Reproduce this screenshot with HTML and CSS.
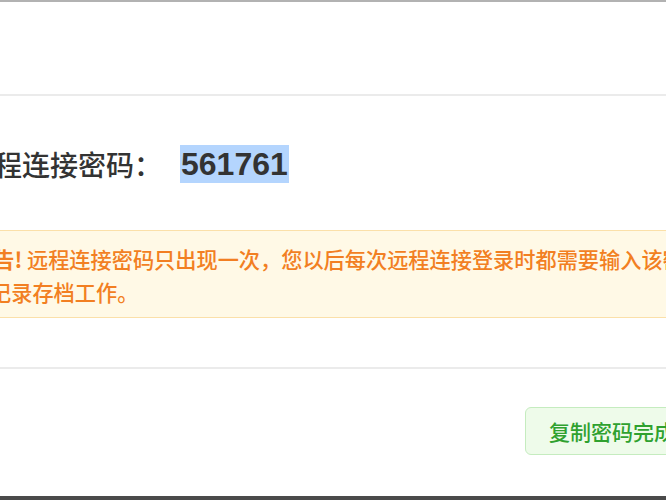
FILE: index.html
```html
<!DOCTYPE html>
<html lang="zh-CN">
<head>
<meta charset="utf-8">
<title>远程连接密码</title>
<link rel="stylesheet" href="styles.css">
</head>
<body>
<div class="modal">
  <div class="modal-header"></div>
  <div class="modal-body">
    <div class="pwd-title">
      <span class="pwd-label">远程连接密码：</span>
      <span class="pwd-value">561761</span>
    </div>
    <div class="alert">
      <div class="alert-line first"><strong>警告!</strong> 远程连接密码只出现一次，您以后每次远程连接登录时都需要输入该密码，请</div>
      <div class="alert-line">记录存档工作。</div>
    </div>
  </div>
  <div class="modal-footer">
    <button class="btn-done" type="button">复制密码完成</button>
  </div>
</div>
<div class="bottom-bar"></div>
</body>
</html>
```
FILE: styles.css
```css
html, body {
  margin: 0;
  padding: 0;
  overflow: hidden;
  background: #ffffff;
  height: 500px;
}

body {
  font-family: "Noto Sans CJK SC", "Liberation Sans", sans-serif;
  display: flex;
  flex-direction: column;
  width: 666px;
}

.modal {
  width: 746px;
  margin-left: -40px;
  border-top: 2px solid #b2b2b2;
  display: flex;
  flex-direction: column;
  flex: 1;
}

.modal-header {
  height: 92px;
  border-bottom: 2px solid #ebebeb;
}

.modal-body {
  padding: 49px 13px 49px 9px;
  border-bottom: 2px solid #ebebeb;
}

.pwd-title {
  display: flex;
  align-items: center;
  height: 38px;
  white-space: nowrap;
}

.pwd-label {
  font-size: 28px;
  color: #333333;
  font-weight: 500;
  margin-left: -3px;
  margin-right: 18px;
}

.pwd-value {
  font-family: "Liberation Sans", Arial, sans-serif;
  font-weight: bold;
  font-size: 32px;
  line-height: 38px;
  height: 38px;
  color: #333333;
  background: #b4d5fe;
  padding: 0 1px;
}

.alert {
  margin-top: 47px;
  background: #fff9e6;
  border: 1px solid #fbe0a9;
  padding: 11px 16px 9px 20px;
  color: #f27f22;
  font-size: 21.2px;
  font-weight: 500;
  line-height: 33px;
  white-space: nowrap;
  overflow: hidden;
}

.alert-line.first {
  text-indent: -18px;
}

.alert strong {
  font-weight: bold;
}

.modal-footer {
  flex: 1;
  display: flex;
  justify-content: flex-end;
  align-items: flex-start;
  padding: 38px 7px 0 0;
}

.btn-done {
  font-family: "Noto Sans CJK SC", "Liberation Sans", sans-serif;
  font-size: 21px;
  font-weight: 500;
  color: #2fa12f;
  background: #eefbea;
  border: 1px solid #c5ecbf;
  border-radius: 6px;
  height: 48px;
  padding: 0 23px;
  white-space: nowrap;
}

.bottom-bar {
  height: 4px;
  background: #4a4a4a;
  flex: none;
}
```
